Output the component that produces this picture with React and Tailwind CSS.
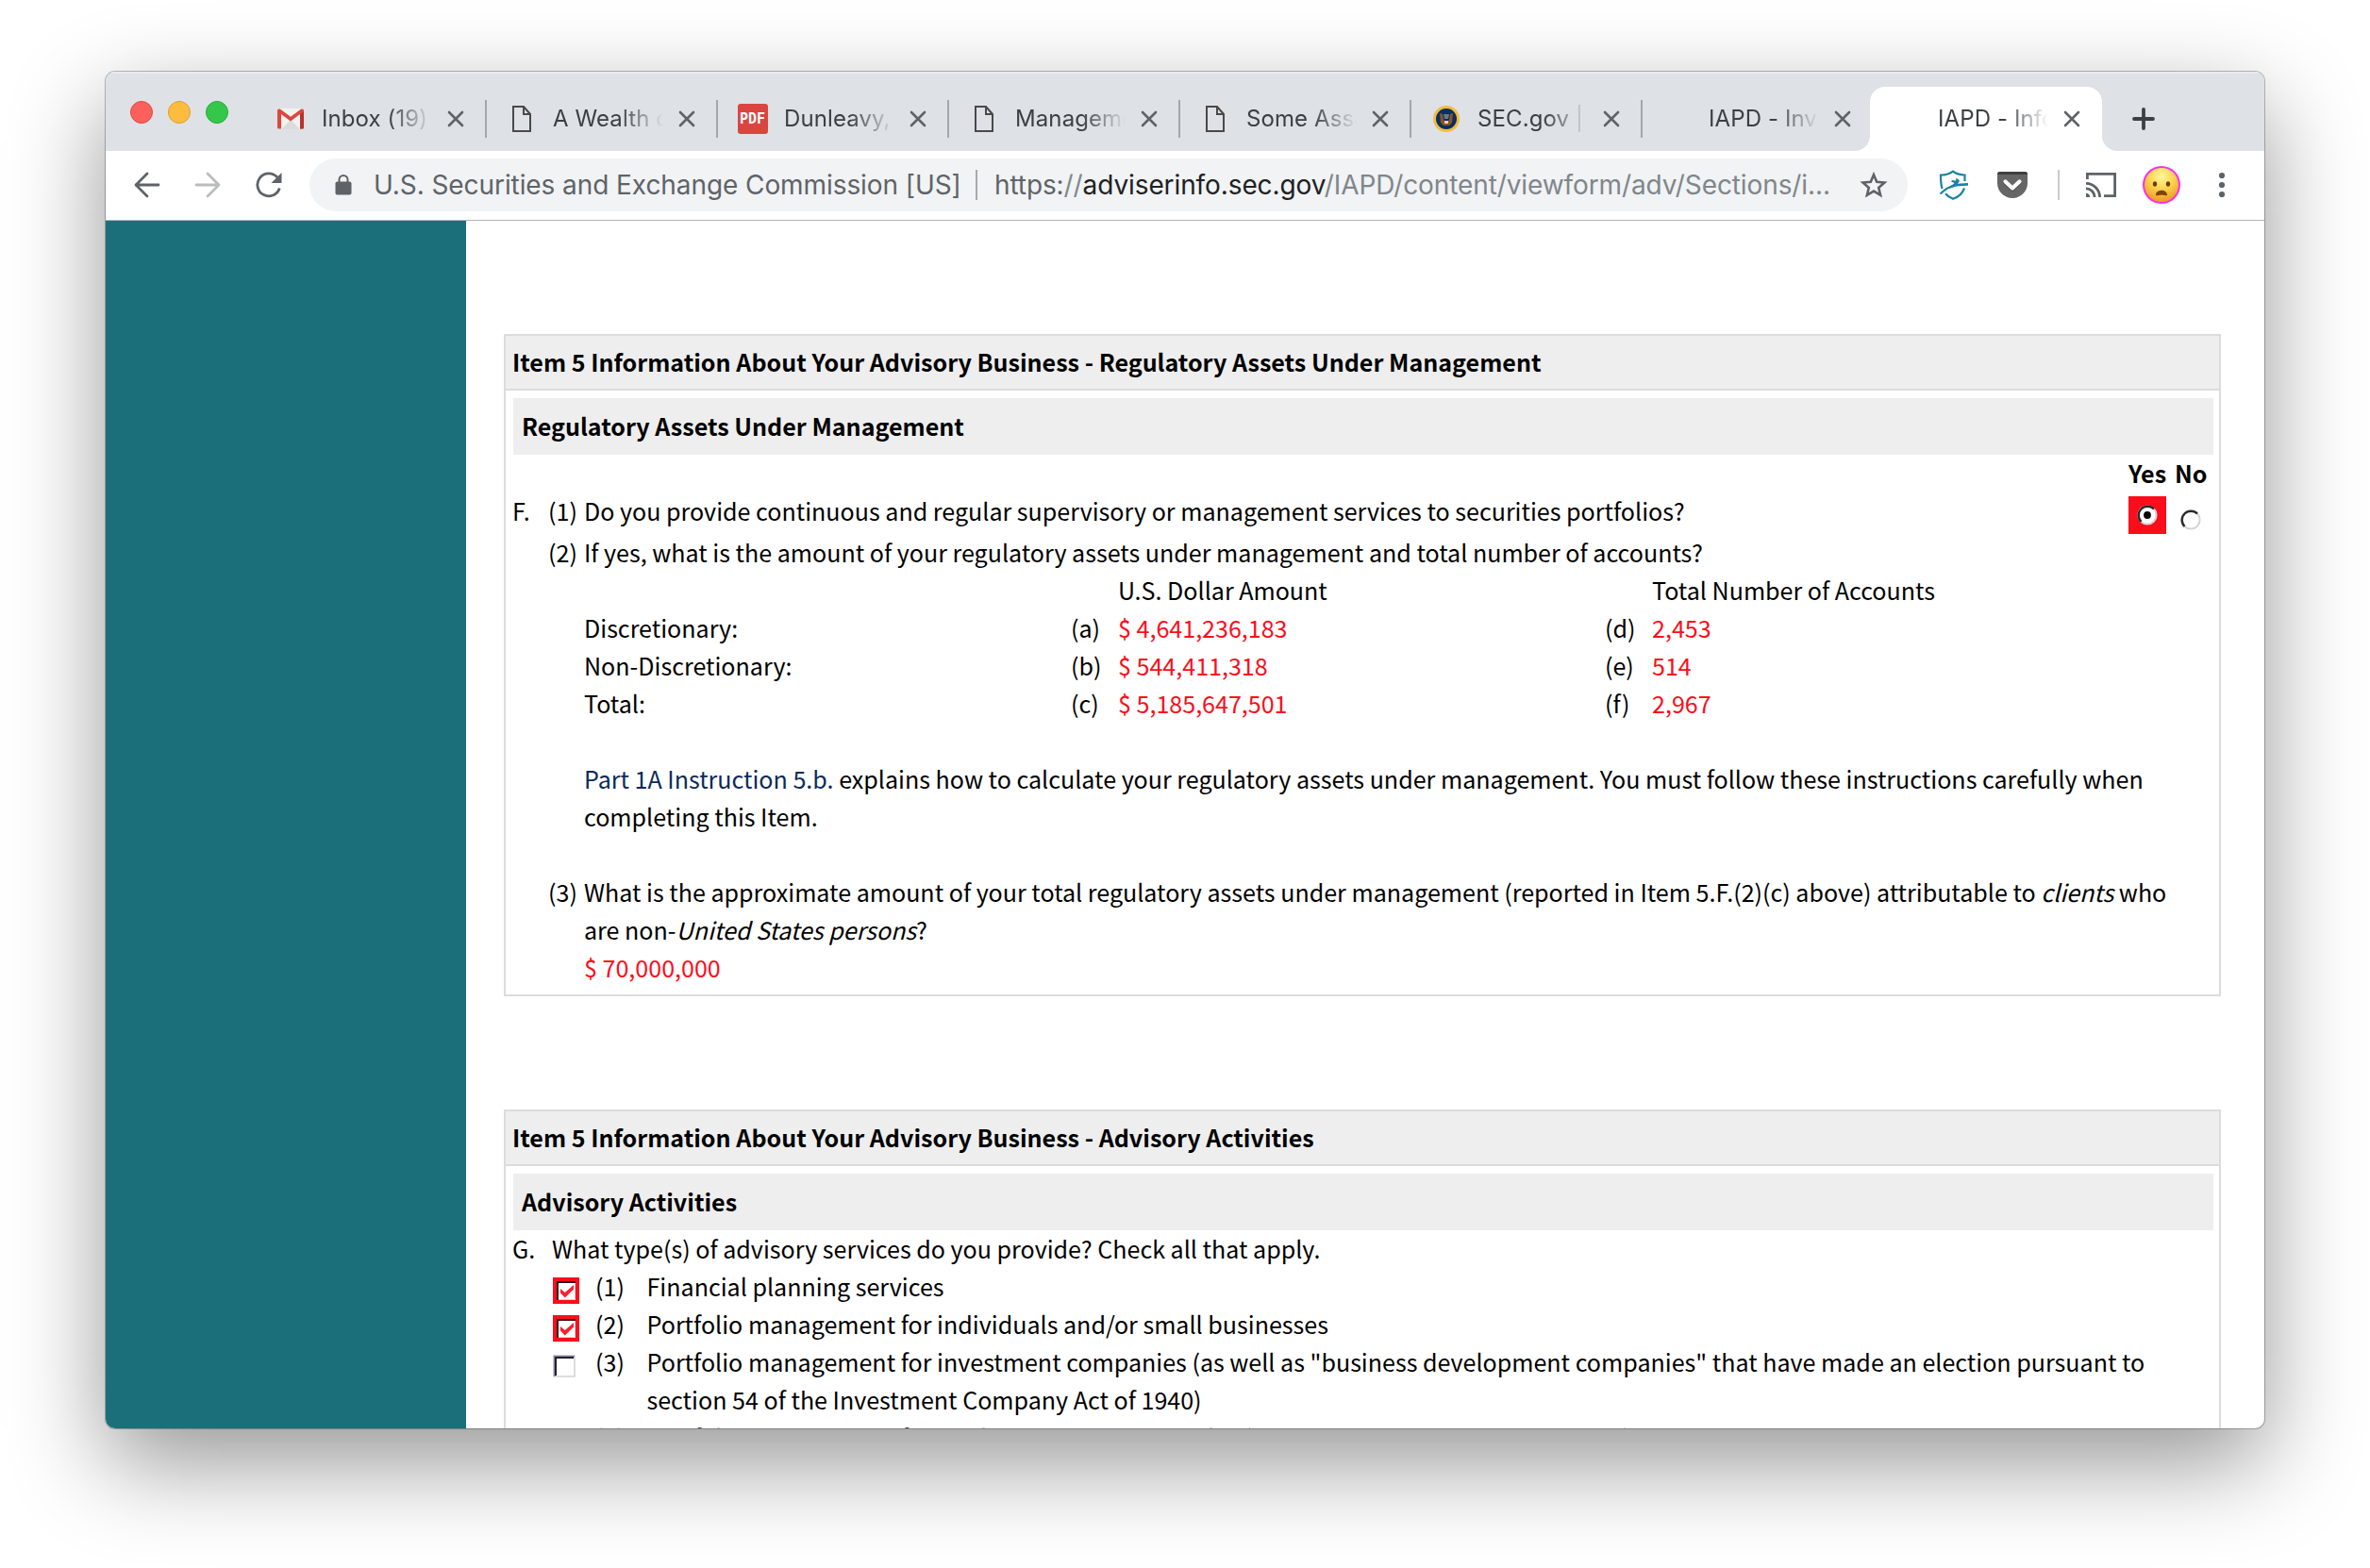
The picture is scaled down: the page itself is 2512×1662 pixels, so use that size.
import React from "react";

const TABS = [
  { title: "Inbox (19)", icon: "gmail" },
  { title: "A Wealth of", icon: "file" },
  { title: "Dunleavy, 2", icon: "pdf" },
  { title: "Management", icon: "file" },
  { title: "Some Assets", icon: "file" },
  { title: "SEC.gov | H", icon: "seal" },
  { title: "IAPD - Inves", icon: "none" },
];

const AMOUNTS = [
  ["Discretionary:", "(a)", "$ 4,641,236,183", "(d)", "2,453"],
  ["Non-Discretionary:", "(b)", "$ 544,411,318", "(e)", "514"],
  ["Total:", "(c)", "$ 5,185,647,501", "(f)", "2,967"],
];

function Close() {
  return (
    <svg viewBox="0 0 18 18" className="h-[18px] w-[18px] shrink-0" fill="none" stroke="#5f6368" strokeWidth="2.6" strokeLinecap="round">
      <path d="M2 2 16 16M16 2 2 16" />
    </svg>
  );
}

function TabIcon({ kind }) {
  if (kind === "gmail")
    return (
      <svg viewBox="0 0 28 22" className="h-[22px] w-[28px]">
        <path d="M2 0h24v22H2z" fill="#f2f2f2" />
        <path d="M4 22 14 12l10 10z" fill="#dcdcdc" />
        <path d="M0 2.2V20a1.600 1.600 0 0 0 1.600 1.600H4V6l10 7.400L24 6v15.600h2.400A1.600 1.600 0 0 0 28 20V2.200C28 .8 26.500 0 25.200.6L14 8.800 2.800.6C1.500 0 0 .8 0 2.200z" fill="#dc483c" />
        <path d="M24 6v15.600h2.400A1.600 1.600 0 0 0 28 20V3z" fill="#b7332b" />
      </svg>
    );
  if (kind === "file")
    return (
      <svg viewBox="0 0 20 28" className="h-[28px] w-[20px]" fill="none" stroke="#494949" strokeWidth="2">
        <path d="M1 1h11l7 8v18H1z" />
        <path d="M12 1v8h7" />
      </svg>
    );
  if (kind === "pdf")
    return (
      <span className="flex h-8 w-8 items-center justify-center rounded-[3px] bg-[#db4540] font-['DejaVu_Sans_Mono'] text-[15px] font-bold leading-none text-white">
        PDF
      </span>
    );
  if (kind === "seal")
    return (
      <svg viewBox="0 0 28 28" className="h-7 w-7">
        <circle cx="14" cy="14" r="14" fill="#f2bd42" />
        <circle cx="14" cy="14" r="11" fill="#0c2f5c" />
        <path d="M7 8l3 1 1 6 2 2h2l2-2 1-6 3-1-1 10-3 3h-6l-3-3z" fill="#8a5523" />
        <path d="M11 9h6l-1 5h-4z" fill="#66788f" />
        <path d="M12 16h4v3h-4z" fill="#f1c9b8" />
      </svg>
    );
  return null;
}

function FadeTitle({ children }) {
  return (
    <span className="w-[117px] shrink-0 overflow-hidden whitespace-nowrap text-[24px] leading-[32px] tracking-[0.1px] text-[#3c4043] [mask-image:linear-gradient(to_right,black_60%,transparent_100%)]">
      {children}
    </span>
  );
}

function TabStrip() {
  return (
    <div className="flex h-[84px] shrink-0 items-end bg-[#dee1e6] shadow-[inset_0_2px_0_#e9ebee]">
      <div className="flex h-[84px] w-[159px] shrink-0 gap-4 pl-[26px] pt-[31px]">
        <span className="h-6 w-6 rounded-full border border-[#e2463f] bg-[#fc605c]" />
        <span className="h-6 w-6 rounded-full border border-[#e0a028] bg-[#fdbc40]" />
        <span className="h-6 w-6 rounded-full border border-[#27aa35] bg-[#34c84a]" />
      </div>
      {TABS.map((t, i) => (
        <div key={t.title} className="flex h-[68px] w-[245px] shrink-0 items-center">
          <div className="flex h-10 w-[243px] items-center">
            <span className="flex w-[70px] shrink-0 items-center justify-center pl-[3px]">
              <TabIcon kind={t.icon} />
            </span>
            <FadeTitle>{t.title}</FadeTitle>
            <span className="ml-4"><Close /></span>
          </div>
          {i < 6 && <span className="h-10 w-[2px] bg-[#a3a6ab]" />}
        </div>
      ))}
      <div className="relative -ml-1 flex h-[68px] w-[246px] shrink-0 items-center rounded-t-2xl bg-white pl-[72px]">
        <svg viewBox="0 0 16 16" className="absolute -left-4 bottom-0 h-4 w-4" fill="#fff">
          <path d="M16 0v16H0A16 16 0 0 0 16 0z" />
        </svg>
        <svg viewBox="0 0 16 16" className="absolute -right-4 bottom-0 h-4 w-4" fill="#fff">
          <path d="M0 0v16h16A16 16 0 0 1 0 0z" />
        </svg>
        <FadeTitle>IAPD - Infor</FadeTitle>
        <span className="ml-4"><Close /></span>
      </div>
      <div className="flex h-[68px] items-center pl-8">
        <svg viewBox="0 0 24 24" className="h-6 w-6" stroke="#3c4043" strokeWidth="3.8" strokeLinecap="round">
          <path d="M12 2v20M2 12h20" />
        </svg>
      </div>
    </div>
  );
}

function Toolbar() {
  return (
    <div className="flex h-[74px] shrink-0 items-center border-b border-[#b3b3b5] bg-white pb-px text-[28px] text-[#5f6368]">
      <svg viewBox="0 0 28 28" className="ml-[30px] h-7 w-7" fill="none" stroke="#5f6368" strokeWidth="2.8" strokeLinecap="round" strokeLinejoin="round">
        <path d="M26 14H2M14 2 2 14l12 12" />
      </svg>
      <svg viewBox="0 0 28 28" className="ml-9 h-7 w-7" fill="none" stroke="#babcbe" strokeWidth="2.8" strokeLinecap="round" strokeLinejoin="round">
        <path d="M2 14h24M14 2l12 12-12 12" />
      </svg>
      <svg viewBox="0 0 28 28" className="ml-[37px] h-7 w-7" fill="none" stroke="#5f6368" strokeWidth="2.8">
        <path d="M25.300 17.500A12 12 0 1 1 23 6" />
        <path d="M27.500 1v11h-11z" fill="#5f6368" stroke="none" />
      </svg>
      <div className="ml-[29px] flex h-14 w-[1694px] items-center rounded-full bg-[#f1f3f4] pl-[27px] pr-[21px]">
        <svg viewBox="0 0 18 22" className="h-[22px] w-[18px]" fill="#5f6368">
          <rect x="0.5" y="7.5" width="17" height="14" rx="2" />
          <path d="M4.500 8V5.500a4.500 4.500 0 0 1 9 0V8" fill="none" stroke="#5f6368" strokeWidth="2" />
        </svg>
        <span className="ml-[23px] w-[622px] whitespace-nowrap tracking-[-0.08px]">U.S. Securities and Exchange Commission [US]</span>
        <span className="ml-4 h-8 w-[2px] bg-[#a6a9ad]" />
        <span className="ml-[18px] whitespace-nowrap tracking-[-0.1px] text-[#80868b]">
          <span className="text-[#5f6368]">https:</span>//<span className="text-[#202124]">adviserinfo.sec.gov</span>/IAPD/content/viewform/adv/Sections/i...
        </span>
        <svg viewBox="0 0 30 30" className="ml-auto h-[30px] w-[30px]" fill="none" stroke="#5f6368" strokeWidth="2.6">
          <path d="M15 4.200l3.200 7.600 8.200.7-6.200 5.400 1.900 8-7.100-4.300-7.100 4.300 1.900-8-6.200-5.400 8.200-.7z" />
        </svg>
      </div>
      <svg viewBox="0 0 32 32" className="ml-[33px] h-8 w-8" fill="none" stroke="#1a83a0" strokeWidth="2.2">
        <path d="M3.500 20C2 15 2 10 2 5.500 7 5.500 12 4 15 1.600c3 2.400 8 3.700 12.500 3.900V12" />
        <path d="M27 19.500c-2 5.500-6.500 9.500-12 11.300-3.500-1.300-6-3-8-5.500" />
        <path d="M1.500 25.500C6 21 10.500 17.800 17 16.200l14-1" />
        <path d="M9 20.500 16.500 14l-3.500-1.500 1-1.500 4 .5.500-3 3.500 3-2 3.500 11-.2v1.700l-12.500 1z" fill="#1a83a0" stroke="none" />
      </svg>
      <svg viewBox="0 0 32 28" className="ml-[30px] h-7 w-8">
        <path d="M0 3a3 3 0 0 1 3-3h26a3 3 0 0 1 3 3v9a16 16 0 0 1-32 0z" fill="#666" />
        <path d="M0 3a3 3 0 0 1 3-3h26a3 3 0 0 1 3 3H0z" fill="#3d3d3d" />
        <path d="M8.500 11.500 16 18.500l7.500-7" fill="none" stroke="#444" strokeWidth="4.400" strokeLinecap="round" strokeLinejoin="round" />
        <path d="M8.500 10.500 16 17.500l7.500-7" fill="none" stroke="#fff" strokeWidth="4.200" strokeLinecap="round" strokeLinejoin="round" />
      </svg>
      <span className="ml-8 h-8 w-[2px] bg-[#c9cacc]" />
      <svg viewBox="0 0 32 26" className="ml-7 h-[26px] w-8" fill="none" stroke="#5f6368" strokeWidth="2.8">
        <path d="M1.400 7V1.400h29.200v23.200H19" />
        <path d="M0 11.400A14.600 14.600 0 0 1 14.600 26M0 16.900A9.100 9.100 0 0 1 9.100 26" />
        <path d="M0 21.800A4.200 4.200 0 0 1 4.200 26H0z" fill="#5f6368" stroke="none" />
      </svg>
      <svg viewBox="0 0 40 40" className="ml-7 h-10 w-10">
        <defs>
          <radialGradient id="face" cx="50%" cy="25%" r="75%">
            <stop offset="0%" stopColor="#fdf6a0" />
            <stop offset="50%" stopColor="#fbd34c" />
            <stop offset="100%" stopColor="#ee9a24" />
          </radialGradient>
        </defs>
        <circle cx="20" cy="20" r="20" fill="#fb2df0" />
        <circle cx="20" cy="20" r="18" fill="url(#face)" />
        <ellipse cx="13" cy="19" rx="2.200" ry="2.800" fill="#6d3f0e" />
        <ellipse cx="27" cy="19" rx="2.200" ry="2.800" fill="#6d3f0e" />
        <path d="M14 30.500c0-6.500 12-6.500 12 0 0 1.800-2.500.2-6 .2s-6 1.600-6-.2z" fill="#80430f" />
      </svg>
      <svg viewBox="0 0 8 28" className="ml-10 h-7 w-2" fill="#5f6368">
        <circle cx="4" cy="4" r="3.100" />
        <circle cx="4" cy="14" r="3.100" />
        <circle cx="4" cy="24" r="3.100" />
      </svg>
    </div>
  );
}

function Panel({ title, subtitle, children, className }) {
  return (
    <section className={"w-[1820px] border-2 border-[#dcdcdc] " + className}>
      <h2 className="h-[58px] border-b-2 border-[#dcdcdc] bg-[#eeeeee] pl-[7px] pt-[7px] font-bold">{title}</h2>
      <div className="pl-2 pr-[6px] pt-2">
        <h3 className="h-[60px] bg-[#eeeeee] pl-[9px] pt-[9px] font-bold">{subtitle}</h3>
        <div className="-mt-px">{children}</div>
      </div>
    </section>
  );
}

function Radio({ on }) {
  return (
    <svg viewBox="0 0 24 24" className="h-6 w-6" fill="none">
      <circle cx="12" cy="12" r="9.600" fill="#fff" stroke="#d4d4d4" strokeWidth="2" />
      <path d="M5.500 19A9.400 9.400 0 0 1 19 5.500" stroke="#2a2a2a" strokeWidth="2.400" />
      {on && <circle cx="12" cy="12" r="3.900" fill="#000" />}
    </svg>
  );
}

function Check({ on }) {
  if (on)
    return (
      <svg viewBox="0 0 28 28" className="mt-[11px] h-7 w-7" fill="none">
        <path d="M0 0h28v28H0z" fill="#fd0d1b" />
        <path d="M4 4h20v20H4z" fill="#fff" />
        <path d="M5 24V5h19" stroke="#2b1416" strokeWidth="2" />
        <path d="M6 23.500h17.500V6" stroke="#d8cfcf" />
        <path d="M8 12v4.500l4.800 5L22 12.500V8L12.800 16z" fill="#fb1f2e" />
      </svg>
    );
  return (
    <svg viewBox="0 0 24 24" className="mt-[13px] h-6 w-6" fill="none">
      <path d="M1 23h22V1" stroke="#d5d2da" strokeWidth="1.600" />
      <path d="M1.500 23V1.500H23" stroke="#8f86ab" strokeWidth="2" />
      <path d="M3 22V3h19" stroke="#222" strokeWidth="2" />
    </svg>
  );
}

function Service({ n, on, children }) {
  return (
    <div className="flex pl-[42px]">
      <span className="w-[45px] shrink-0"><Check on={on} /></span>
      <span className="w-[54.5px] shrink-0">{n}</span>
      <span className="whitespace-nowrap">{children}</span>
    </div>
  );
}

export default function App() {
  return (
    <div className="h-[1662px] w-[2512px] overflow-hidden bg-white pl-[112px] pt-[76px] font-['Inter',sans-serif]">
      <div className="flex h-[1438px] w-[2288px] flex-col overflow-hidden rounded-[10px] bg-white shadow-[0_0_0_1px_rgba(0,0,0,0.26),0_36px_100px_rgba(0,0,0,0.42)]">
        <TabStrip />
        <Toolbar />
        <div className="flex min-h-0 grow font-['Noto_Sans_CJK_SC',sans-serif] text-[25.07px] leading-10 text-black">
          <aside className="w-[382px] shrink-0 bg-[#1b6f7b]" />
          <main className="pl-10 pt-[120px]">
            <Panel
              className="h-[702px]"
              title="Item 5 Information About Your Advisory Business - Regulatory Assets Under Management"
              subtitle="Regulatory Assets Under Management"
            >
              <div className="flex h-10 justify-end pr-2 font-bold">
                <span className="w-[49px]">Yes</span>
                <span className="w-[33px]">No</span>
              </div>
              <div className="flex h-11">
                <span className="-ml-px w-[38px]">F.</span>
                <span className="w-[38px]">(1)</span>
                <span className="whitespace-nowrap">Do you provide continuous and regular supervisory or management services to securities portfolios?</span>
                <span className="ml-auto mr-3 flex gap-[14px] pt-[5px]">
                  <span className="flex h-10 w-10 items-center justify-center bg-[#fd0d1b]"><Radio on /></span>
                  <span className="pt-[13px]"><Radio /></span>
                </span>
              </div>
              <div className="flex pl-[37px]">
                <span className="w-[38px] shrink-0">(2)</span>
                <div>
                  <p className="whitespace-nowrap">If yes, what is the amount of your regulatory assets under management and total number of accounts?</p>
                  <div className="grid w-[1700px] grid-cols-[516px_50px_516px_50px_1fr]">
                    <span className="col-start-3">U.S. Dollar Amount</span>
                    <span className="col-start-5">Total Number of Accounts</span>
                    {AMOUNTS.map((row) =>
                      row.map((cell, i) => (
                        <span key={cell} className={i === 2 || i === 4 ? "text-[#fd0d1b]" : ""}>{cell}</span>
                      ))
                    )}
                  </div>
                </div>
              </div>
              <p className="whitespace-nowrap pl-[75px] pt-10">
                <span className="text-[#0b2a5b]">Part 1A Instruction 5.b.</span> explains how to calculate your regulatory assets under management. You must follow these instructions carefully when
                <br />
                completing this Item.
              </p>
              <div className="flex pl-[37px] pt-10">
                <span className="w-[38px] shrink-0">(3)</span>
                <p className="whitespace-nowrap">
                  What is the approximate amount of your total regulatory assets under management (reported in Item 5.F.(2)(c) above) attributable to <i>clients</i> who
                  <br />
                  are non-<i>United States persons</i>?
                  <br />
                  <span className="text-[#fd0d1b]">$ 70,000,000</span>
                </p>
              </div>
            </Panel>
            <Panel
              className="mt-[120px]"
              title="Item 5 Information About Your Advisory Business - Advisory Activities"
              subtitle="Advisory Activities"
            >
              <div className="flex">
                <span className="-ml-px w-[42px]">G.</span>
                <span>What type(s) of advisory services do you provide? Check all that apply.</span>
              </div>
              <Service n="(1)" on>Financial planning services</Service>
              <Service n="(2)" on>Portfolio management for individuals and/or small businesses</Service>
              <Service n="(3)">
                Portfolio management for investment companies (as well as "business development companies" that have made an election pursuant to
                <br />
                section 54 of the Investment Company Act of 1940)
              </Service>
              <Service n="(4)">Portfolio management for pooled investment vehicles (other than investment companies)</Service>
            </Panel>
          </main>
        </div>
      </div>
    </div>
  );
}
